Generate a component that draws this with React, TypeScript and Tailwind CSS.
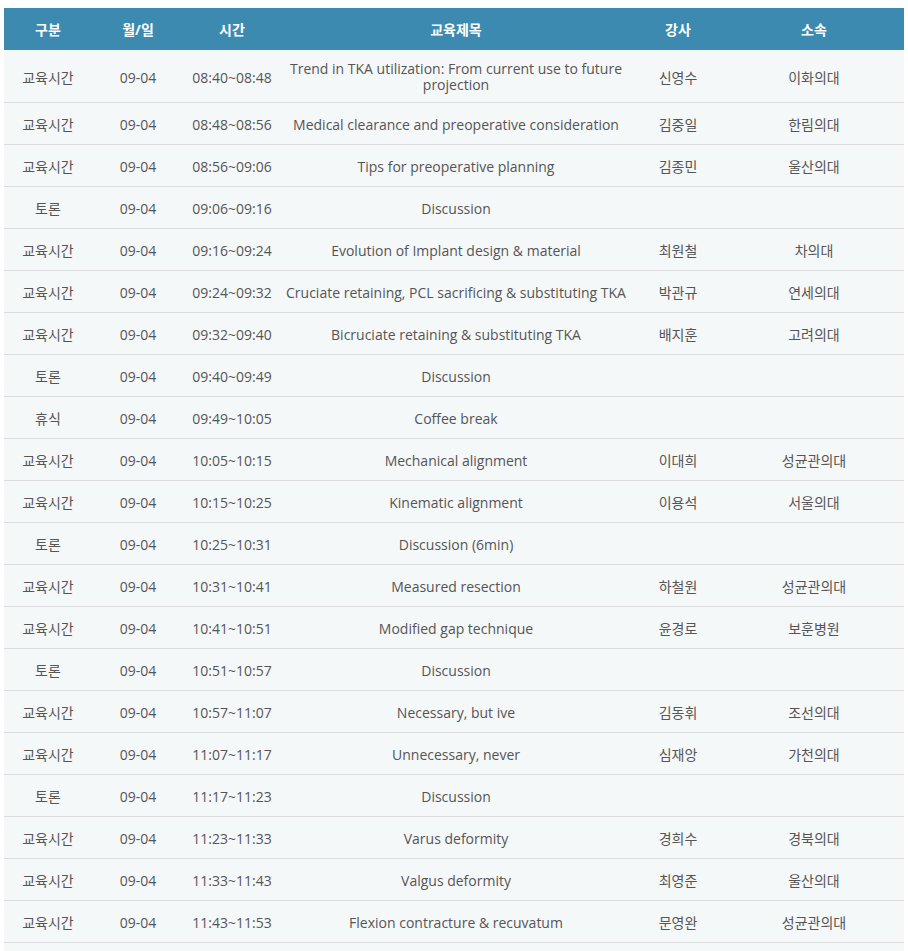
const rows: string[][] = [
["교육시간","09-04","08:40~08:48","Trend in TKA utilization: From current use to future projection","신영수","이화의대"],
["교육시간","09-04","08:48~08:56","Medical clearance and preoperative consideration","김중일","한림의대"],
["교육시간","09-04","08:56~09:06","Tips for preoperative planning","김종민","울산의대"],
["토론","09-04","09:06~09:16","Discussion","",""],
["교육시간","09-04","09:16~09:24","Evolution of Implant design & material","최원철","차의대"],
["교육시간","09-04","09:24~09:32","Cruciate retaining, PCL sacrificing & substituting TKA","박관규","연세의대"],
["교육시간","09-04","09:32~09:40","Bicruciate retaining & substituting TKA","배지훈","고려의대"],
["토론","09-04","09:40~09:49","Discussion","",""],
["휴식","09-04","09:49~10:05","Coffee break","",""],
["교육시간","09-04","10:05~10:15","Mechanical alignment","이대희","성균관의대"],
["교육시간","09-04","10:15~10:25","Kinematic alignment","이용석","서울의대"],
["토론","09-04","10:25~10:31","Discussion (6min)","",""],
["교육시간","09-04","10:31~10:41","Measured resection","하철원","성균관의대"],
["교육시간","09-04","10:41~10:51","Modified gap technique","윤경로","보훈병원"],
["토론","09-04","10:51~10:57","Discussion","",""],
["교육시간","09-04","10:57~11:07","Necessary, but ive","김동휘","조선의대"],
["교육시간","09-04","11:07~11:17","Unnecessary, never","심재앙","가천의대"],
["토론","09-04","11:17~11:23","Discussion","",""],
["교육시간","09-04","11:23~11:33","Varus deformity","경희수","경북의대"],
["교육시간","09-04","11:33~11:43","Valgus deformity","최영준","울산의대"],
["교육시간","09-04","11:43~11:53","Flexion contracture & recuvatum","문영완","성균관의대"],
];
const cols = "grid grid-cols-[88px_92px_96px_352px_92px_180px]";
export default function App() {
  return (
    <div className="bg-white h-[951px] overflow-hidden pt-2 px-1" style={{ fontFamily: '"Open Sans","Noto Sans CJK KR",sans-serif' }}>
      <div className={`${cols} bg-[#3d8ab0] text-white font-bold text-[14px] h-[42px] items-center text-center`}>
        {["구분","월/일","시간","교육제목","강사","소속"].map((h) => <div key={h}>{h}</div>)}
      </div>
      {rows.map((r, i) => (
        <div key={i} className={`${cols} bg-[#f5f8f9] border-b border-[#dcdcdc] text-[14px] text-[#555] text-center items-center pt-[2px] ${i === 0 ? "h-[53px]" : "h-[42px]"}`}>
          {r.map((c, j) => <div key={j} className={j === 3 ? "leading-[16px] px-1" : ""}>{c}</div>)}
        </div>
      ))}
      <div className="h-[42px] bg-[#f5f8f9]" />
    </div>
  );
}
